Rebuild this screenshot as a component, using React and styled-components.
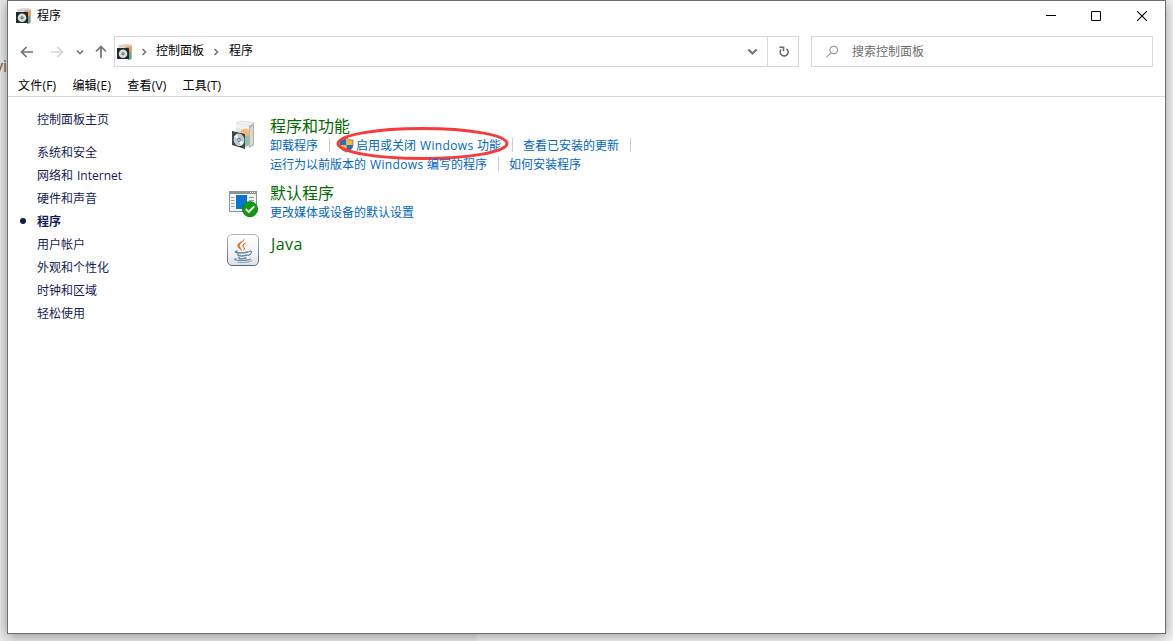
import styled, { createGlobalStyle, css } from "styled-components";

const GlobalStyle = createGlobalStyle`
  * {
    box-sizing: border-box;
  }
  body {
    margin: 0;
    overflow: hidden;
    font-family: "Open Sans", "Noto Sans CJK SC", sans-serif;
    font-size: 12px;
    line-height: 19px;
    color: #000;
  }
  svg {
    display: block;
    flex: none;
  }
`;

const Desktop = styled.div`
  position: relative;
  height: 641px;
  padding: 0 7px;
  overflow: hidden;
  background: linear-gradient(to right, #e9e9e9 477px, #f3f3f3 477px);
`;

const BehindText = styled.span`
  position: absolute;
  left: -5px;
  top: 57px;
  font-size: 16px;
  color: #8f5a33;
`;

const Window = styled.main`
  position: relative;
  display: flex;
  flex-direction: column;
  height: 634px;
  background: #fff;
  border: 1px solid #6e6e6e;
  box-shadow: 0 2px 12px rgba(0, 0, 0, 0.38);
`;

const TitleBar = styled.header`
  display: flex;
  align-items: center;
  height: 29px;
  padding-left: 8px;
  gap: 5px;
`;

const WindowButtons = styled.div`
  display: flex;
  margin-left: auto;
`;

const WindowButton = styled.button`
  display: flex;
  align-items: center;
  justify-content: center;
  width: ${({ $width = 45 }) => $width}px;
  height: 27px;
  padding: 0;
  border: 0;
  background: none;
`;

const NavBar = styled.div`
  display: flex;
  height: 31px;
  margin-top: 6px;
  padding-right: 12px;
`;

const NavArrows = styled.div`
  display: flex;
  align-items: center;
  width: 106px;
  padding-left: 12px;
`;

const ArrowSlot = styled.span`
  width: ${({ $width }) => $width}px;
`;

const AddressBar = styled.div`
  display: flex;
  align-items: center;
  width: 685px;
  padding-left: 2px;
  border: 1px solid #d9d9d9;
`;

const Crumb = styled.span`
  margin-top: -2px;
`;

const CrumbArrow = styled.span`
  display: flex;
  justify-content: center;
  width: ${({ $width = 25 }) => $width}px;
  padding-right: 2px;
`;

const DropButton = styled.span`
  display: flex;
  margin-left: auto;
  padding: 0 9px;
`;

const RefreshButton = styled.span`
  display: flex;
  align-items: center;
  justify-content: center;
  width: 31px;
  height: 100%;
  padding-left: 2px;
  border-left: 1px solid #d9d9d9;
`;

const SearchBox = styled.div`
  display: flex;
  align-items: center;
  flex: 1;
  gap: 13px;
  margin-left: 12px;
  padding: 0 0 0 13px;
  color: #6d6d6d;
  border: 1px solid #d9d9d9;
`;

const MenuBar = styled.nav`
  display: flex;
  height: 30px;
  gap: 16px;
  padding: 9px 0 0 10px;
  letter-spacing: 0.22px;
  border-bottom: 1px solid #d9d9d9;
`;

const Body = styled.div`
  display: flex;
  flex: 1;
`;

const Sidebar = styled.aside`
  width: 219px;
  padding: 11px 0 0 12px;
`;

const SideLink = styled.div`
  display: flex;
  align-items: center;
  height: 23px;
  color: #151c55;

  &::before {
    content: "";
    width: 6px;
    height: 6px;
    margin: -1px 11px 0 0;
    border-radius: 50%;
  }

  ${({ $home }) =>
    $home &&
    css`
      margin-bottom: 10px;
    `}

  ${({ $active }) =>
    $active &&
    css`
      font-weight: bold;

      &::before {
        background: #151c55;
      }
    `}
`;

const Content = styled.section`
  padding-top: 20px;
`;

const Category = styled.article`
  display: flex;
  height: ${({ $height }) => $height}px;
`;

const CategoryIcon = styled.div`
  width: 43px;
  padding-top: ${({ $top }) => $top}px;
`;

const CategoryTitle = styled.h2`
  margin: 0;
  font-size: 16px;
  font-weight: normal;
  line-height: 19px;
  color: #006b00;
`;

const LatinTitle = styled(CategoryTitle)`
  padding: 1px 0 0 1px;
  letter-spacing: 0.4px;
`;

const LinkRow = styled.div`
  display: flex;
  height: 19px;
  white-space: nowrap;
`;

const TaskLink = styled.a`
  position: relative;
  display: flex;
  align-items: center;
  color: #0066cc;
`;

const Latin = styled.span`
  width: 53px;
  margin: 0 4px;
  letter-spacing: 0.35px;
`;

const InternetWord = styled.span`
  margin-left: 4px;
`;

const Separator = styled.span`
  width: 1px;
  height: 14px;
  margin: 2px 10px 0 11px;
  background: #ccc;
`;

const ShieldSlot = styled.span`
  margin: -2px 2px 0 -1px;
`;

const RedCircle = styled.svg`
  position: absolute;
  left: -5px;
  top: -10px;
  overflow: visible;
`;

const ProgramsIcon = () => (
  <svg width="16" height="16" viewBox="0 0 16 16">
    <path d="M2 1 13 0l2 1v14l-4 1V5H1z" fill="#dedede" />
    <path d="M2 1 13 0l-1 3H1z" fill="#d3d3d3" />
    <path d="m12 3 3-2v14l-3 1z" fill="#b9b9b9" />
    <circle cx="11" cy="6" r="3.800" fill="#ef9b45" />
    <path d="M11 8h3v7l-3 1z" fill="#65a68b" />
    <path d="M0 4h11.500l.5 1v10H0z" fill="#24292c" />
    <circle cx="6" cy="9.800" r="4.300" fill="#d8dee0" />
    <circle cx="6" cy="9.800" r="1.500" fill="#50575a" />
    <circle cx="6" cy="9.800" r=".6" fill="#fff" />
  </svg>
);

const BoxIcon = () => (
  <svg width="32" height="32" viewBox="0 0 32 32">
    <path d="m9 5 4-2 15 2-5 3z" fill="#f1f1f1" stroke="#d0d0d0" strokeWidth=".6" />
    <path d="m9 6 13 2v22L9 26z" fill="#e4e4e4" />
    <path d="m9 6 13 2v4L9 10z" fill="#f2f2f2" />
    <path d="m22 8 5-3v22l-5 3z" fill="#b8b4b4" />
    <path d="m23 10 3-2v18l-3 2z" fill="#d8d6d6" />
    <circle cx="18" cy="15.500" r="4.800" fill="#f4b871" />
    <path d="m17 17 5 1v9l-5 2z" fill="#8dc2a4" />
    <path d="m5 13 13 3v15L5 27z" fill="#41484d" />
    <ellipse cx="12" cy="21.800" rx="5.400" ry="6.300" fill="#bccbd6" transform="rotate(-12 12 21.800)" />
    <path d="m12 21.800-5-3 3-3zM12 21.800l5 3-3 3z" fill="#f5fafc" />
    <ellipse cx="12" cy="21.800" rx="1.800" ry="2.100" fill="#66747d" />
    <ellipse cx="12" cy="21.800" rx=".8" ry=".9" fill="#fff" />
  </svg>
);

const DefaultsIcon = () => (
  <svg width="32" height="32" viewBox="0 0 32 32">
    <path d="M2.500 5.500h27v20h-27z" fill="#f5f5f5" stroke="#8e9396" />
    <path d="M2 5h28v3H2z" fill="#8e9396" />
    <path d="M23 6.500h1m1 0h1m1 0h1" stroke="#fff" />
    <path d="M9 9h11v14H9z" fill="#0875d1" />
    <path d="M4 11.500h3.500m-3.500 3h3.500m-3.500 3h3.500m-3.500 3h3.500M22 11.500h5m-5 3h5" stroke="#9a9a9a" />
    <circle cx="23" cy="23.200" r="7.500" fill="#109c10" stroke="#087d0b" />
    <path d="m18.800 23 3 3 5.500-5.700" fill="none" stroke="#fff" strokeWidth="1.900" />
  </svg>
);

const JavaIcon = () => (
  <svg width="32" height="32" viewBox="0 0 32 32">
    <defs>
      <linearGradient id="java" x2="0" y2="1">
        <stop stopColor="#fff" />
        <stop offset=".6" stopColor="#f3f4f5" />
        <stop offset="1" stopColor="#dbe1e5" />
      </linearGradient>
      <linearGradient id="javaEdge" x2="0" y2="1">
        <stop stopColor="#a9b8c2" />
        <stop offset="1" stopColor="#536b7c" />
      </linearGradient>
    </defs>
    <rect x=".5" y=".5" width="31" height="31" rx="4.500" fill="url(#java)" stroke="url(#javaEdge)" />
    <path d="M17 4c2 4-6 5-4 9 .5 1 2 2 2 4-3-3-6-4-4-7 1-2 6-3 6-6" fill="#e76f26" />
    <path d="M20 8c-3 1-6 3-4 5 1 1 1 2 0 4 3-2 2-3 1-4-1-2 1-3 3-5" fill="#e76f26" />
    <g fill="none" stroke="#6689a5" strokeLinecap="round">
      <path d="M10 17c-5 2 3 2.500 11 1M11 20.500c-1 2 6 1.500 9 .5M12 23.500c-1 1.500 4 1.500 7 .5" strokeWidth="1.500" />
      <path d="M22 17.500c4-1.500 3 2.500-1 4M9 24.500c-6 2 10 3 14.500.5" strokeWidth="1.200" />
      <path d="M11 28.200c6 .8 12 0 14-1.700" strokeWidth=".8" />
    </g>
  </svg>
);

const ShieldIcon = () => (
  <svg width="15" height="16" viewBox="0 0 15 16">
    <path d="M7.500 1C5.500 2.700 3 3 1 3v5h6.500z" fill="#1674c9" />
    <path d="M7.500 1C9.500 2.700 12 3 14 3v5H7.500z" fill="#fbb930" />
    <path d="M1 8c.5 4 3 6 6.500 7V8z" fill="#fbb930" />
    <path d="M14 8c-.5 4-3 6-6.500 7V8z" fill="#1674c9" />
    <path
      d="M7.500 1C5.500 2.700 3 3 1 3v5c.5 4 3 6 6.500 7 3.500-1 6-3 6.500-7V3c-2 0-4.500-.3-6.500-2z"
      fill="none"
      stroke="#5f6469"
      strokeWidth=".7"
    />
  </svg>
);

const Chevron = ({ size = 8, down, width = 1.6 }) => (
  <svg width={size} height={size} viewBox="0 0 8 8" fill="none" stroke="#777" strokeWidth={width}>
    <path d={down ? "m1 2.500 3 3 3-3" : "m2.500 1 3 3-3 3"} />
  </svg>
);

const Arrow = ({ rotate = 0, color = "#737373" }) => (
  <svg width="14" height="14" viewBox="0 0 14 14" fill="none" stroke={color} strokeWidth="1.7">
    <path d="M13 7H1.500m5-5-5 5 5 5" transform={`rotate(${rotate} 7 7)`} />
  </svg>
);

const sideLinks = [
  { name: "系统和安全" },
  { name: "网络和", latin: "Internet" },
  { name: "硬件和声音" },
  { name: "程序", active: true },
  { name: "用户帐户" },
  { name: "外观和个性化" },
  { name: "时钟和区域" },
  { name: "轻松使用" },
];

const menus = ["文件(F)", "编辑(E)", "查看(V)", "工具(T)"];

const App = () => {
  return (
    <Desktop>
      <GlobalStyle />
      <BehindText>vi</BehindText>
      <Window>
        <TitleBar>
          <ProgramsIcon />
          <span>程序</span>
          <WindowButtons>
            <WindowButton aria-label="最小化">
              <svg width="10" height="10"><path d="M0 4.500h10" stroke="#000" /></svg>
            </WindowButton>
            <WindowButton aria-label="最大化">
              <svg width="10" height="10"><path d="M.5.5h9v9h-9z" fill="none" stroke="#000" /></svg>
            </WindowButton>
            <WindowButton $width={47} aria-label="关闭">
              <svg width="10" height="10"><path d="m0 0 10 10M10 0 0 10" stroke="#000" strokeWidth="1.100" /></svg>
            </WindowButton>
          </WindowButtons>
        </TitleBar>
        <NavBar>
          <NavArrows>
            <ArrowSlot $width={30}><Arrow /></ArrowSlot>
            <ArrowSlot $width={26}><Arrow rotate={180} color="#d5d5d5" /></ArrowSlot>
            <ArrowSlot $width={18}><Chevron down /></ArrowSlot>
            <Arrow rotate={90} />
          </NavArrows>
          <AddressBar>
            <ProgramsIcon />
            <CrumbArrow $width={23}><Chevron /></CrumbArrow>
            <Crumb>控制面板</Crumb>
            <CrumbArrow><Chevron /></CrumbArrow>
            <Crumb>程序</Crumb>
            <DropButton><Chevron down size={11} /></DropButton>
            <RefreshButton>
              <svg width="12" height="14" viewBox="0 0 12 14" fill="none" stroke="#6b6b6b" strokeWidth="1.600">
                <path d="M8.500 3.800a4 4 0 1 1-5.500.7M1.500 2.300h4v4" />
              </svg>
            </RefreshButton>
          </AddressBar>
          <SearchBox>
            <svg width="14" height="14" viewBox="0 0 14 14" fill="none" stroke="#777" strokeWidth=".9">
              <circle cx="8.700" cy="5" r="3.900" />
              <path d="M6 8 1 12.500" />
            </svg>
            搜索控制面板
          </SearchBox>
        </NavBar>
        <MenuBar>
          {menus.map((menu) => (
            <span key={menu}>{menu}</span>
          ))}
        </MenuBar>
        <Body>
          <Sidebar>
            <SideLink $home>控制面板主页</SideLink>
            {sideLinks.map(({ name, latin, active }) => (
              <SideLink key={name} $active={active}>
                {name}
                {latin && <InternetWord>{latin}</InternetWord>}
              </SideLink>
            ))}
          </Sidebar>
          <Content>
            <Category $height={67}>
              <CategoryIcon $top={1}><BoxIcon /></CategoryIcon>
              <div>
                <CategoryTitle>程序和功能</CategoryTitle>
                <LinkRow>
                  <TaskLink>卸载程序</TaskLink>
                  <Separator />
                  <TaskLink>
                    <ShieldSlot><ShieldIcon /></ShieldSlot>
                    启用或关闭<Latin>Windows</Latin>功能
                    <RedCircle width="174" height="34" viewBox="0 0 174 34">
                      <ellipse cx="87.500" cy="17.500" rx="84.500" ry="15" fill="none" stroke="#f53b3b" strokeWidth="3" />
                    </RedCircle>
                  </TaskLink>
                  <Separator />
                  <TaskLink>查看已安装的更新</TaskLink>
                  <Separator />
                </LinkRow>
                <LinkRow>
                  <TaskLink>运行为以前版本的<Latin>Windows</Latin>编写的程序</TaskLink>
                  <Separator />
                  <TaskLink>如何安装程序</TaskLink>
                </LinkRow>
              </div>
            </Category>
            <Category $height={50}>
              <CategoryIcon $top={2}><DefaultsIcon /></CategoryIcon>
              <div>
                <CategoryTitle>默认程序</CategoryTitle>
                <LinkRow>
                  <TaskLink>更改媒体或设备的默认设置</TaskLink>
                </LinkRow>
              </div>
            </Category>
            <Category $height={50}>
              <CategoryIcon $top={0}><JavaIcon /></CategoryIcon>
              <LatinTitle>Java</LatinTitle>
            </Category>
          </Content>
        </Body>
      </Window>
    </Desktop>
  );
};

export default App;
